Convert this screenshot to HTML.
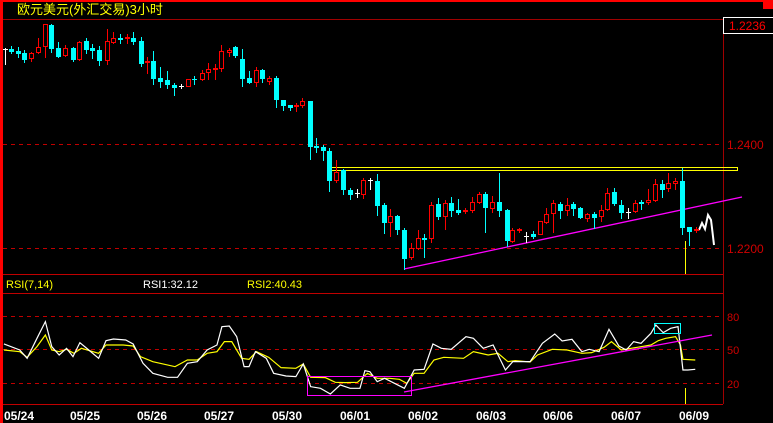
<!DOCTYPE html>
<html><head><meta charset="utf-8"><style>
html,body{margin:0;padding:0;background:#000;width:773px;height:423px;overflow:hidden}
svg{display:block}
text{font-family:"Liberation Sans","Noto Sans CJK SC",sans-serif}
</style></head><body>
<svg id="s" width="773" height="423" viewBox="0 0 773 423" xmlns="http://www.w3.org/2000/svg" shape-rendering="crispEdges">
<rect x="0" y="0" width="773" height="423" fill="#000"/>
<rect x="0" y="0" width="773" height="2" fill="#f00"/>
<rect x="0" y="0" width="3" height="423" fill="#f00"/>
<rect x="763" y="0" width="10" height="9" fill="#f00"/>
<text x="17" y="14" fill="#ff0" font-size="13" font-family="'Liberation Sans','Noto Sans CJK SC',sans-serif">欧元美元(外汇交易)3小时</text>
<line x1="3" y1="19.5" x2="723" y2="19.5" stroke="#a00000"/>
<line x1="723.5" y1="19" x2="723.5" y2="404" stroke="#a00000"/>
<rect x="723.5" y="17.5" width="50" height="16" fill="#000" stroke="#fff"/>
<text x="729" y="30" fill="#f00" font-size="12">1.2236</text>
<g stroke="#c00000" stroke-dasharray="4,4">
<line x1="3" y1="144.5" x2="723" y2="144.5"/>
<line x1="3" y1="248.5" x2="723" y2="248.5"/>
<line x1="3" y1="316.5" x2="723" y2="316.5"/>
<line x1="3" y1="349.5" x2="723" y2="349.5"/>
<line x1="3" y1="383.5" x2="723" y2="383.5"/>
</g>
<text x="727" y="149" fill="#d00000" font-size="12">1.2400</text>
<text x="727" y="253" fill="#d00000" font-size="12">1.2200</text>
<text x="727" y="321" fill="#d00000" font-size="11">80</text>
<text x="727" y="354" fill="#d00000" font-size="11">50</text>
<text x="727" y="388" fill="#d00000" font-size="11">20</text>
<line x1="3" y1="274.5" x2="723" y2="274.5" stroke="#c00000"/>
<line x1="3" y1="293.5" x2="723" y2="293.5" stroke="#c00000"/>
<line x1="3" y1="404.5" x2="723" y2="404.5" stroke="#c00000"/>
<text x="6" y="288" fill="#ff0" font-size="11">RSI(7,14)</text>
<text x="143" y="288" fill="#fff" font-size="11">RSI1:32.12</text>
<text x="247" y="288" fill="#ff0" font-size="11">RSI2:40.43</text>
<rect x="328.5" y="167.5" width="409" height="3" fill="none" stroke="#ff0"/>
<line x1="404" y1="269" x2="742" y2="197" stroke="#f0f" stroke-width="1.3" shape-rendering="auto"/>
<line x1="685.5" y1="241" x2="685.5" y2="274" stroke="#ff0"/>
<line x1="685.5" y1="388" x2="685.5" y2="404" stroke="#ff0"/>
<polyline points="699,230 702,223 705,229 708,215 711,220 712,228 714,245" fill="none" stroke="#fff" stroke-width="2" shape-rendering="auto"/>
<g id="c"></g>
<g transform="translate(0,270) scale(0.4931,0.3333)" fill="none" shape-rendering="auto">
<polyline vector-effect="non-scaling-stroke" stroke-width="1.2" stroke="#ff0" points="8,240 40,245 55,262 75,230 92,195 105,240 120,245 135,238 150,250 165,235 200,250 215,225 250,225 270,228 285,260 310,275 355,290 380,270 400,270 420,250 440,245 455,215 470,215 490,265 505,268 520,245 545,262 570,293 600,295 615,282 630,322 660,323 680,337 700,338 725,337 745,310 765,325 790,325 810,328 825,340 840,310 860,310 880,270 900,262 940,265 960,245 990,255 1010,250 1030,275 1045,272 1075,276 1090,255 1120,238 1150,240 1180,250 1200,248 1225,232 1240,215 1260,240 1280,235 1300,230 1320,225 1335,212 1350,205 1370,200 1380,225 1385,268 1410,270"/>
<polyline vector-effect="non-scaling-stroke" stroke-width="1.2" stroke="#fff" points="8,222 40,240 55,265 75,205 92,155 105,230 120,255 135,235 148,260 162,218 180,240 200,265 215,212 230,207 255,210 270,222 290,280 310,310 340,322 360,322 380,280 400,275 420,240 440,225 450,170 465,168 480,200 495,290 505,290 518,245 540,265 555,310 580,318 600,320 615,282 630,350 650,355 670,372 690,345 710,355 730,355 740,302 750,305 765,335 780,325 800,340 820,355 840,300 860,298 878,222 895,235 915,238 945,200 960,205 980,235 1000,225 1025,300 1040,275 1075,275 1100,220 1125,192 1140,213 1160,208 1180,245 1195,238 1215,245 1235,178 1255,228 1270,240 1285,215 1300,220 1320,190 1330,165 1345,188 1360,175 1375,170 1385,300 1395,300 1410,298"/>
</g>
<rect x="307.5" y="376.5" width="104" height="19" fill="none" stroke="#f0f"/>
<line x1="404" y1="392" x2="712" y2="335" stroke="#f0f" stroke-width="1.3" shape-rendering="auto"/>
<rect x="654.5" y="323.5" width="26" height="10" fill="none" stroke="#0ff"/>
<g fill="#fff" font-size="12" font-weight="bold">
<text x="4" y="420">05/24</text><text x="70" y="420">05/25</text><text x="137" y="420">05/26</text><text x="204" y="420">05/27</text><text x="272" y="420">05/30</text><text x="340" y="420">06/01</text><text x="408" y="420">06/02</text><text x="476" y="420">06/03</text><text x="543" y="420">06/06</text><text x="611" y="420">06/07</text><text x="679" y="420">06/09</text>
</g>
</svg>
<script>
var d=[[4.5,49,50,48,65,'w'],[11,49,52,46,54,'c'],[17.5,51,54,47,58,'c'],[24,53,60,50,63,'c'],[31,53,59,52,62,'r'],[38,47,53,38,54,'r'],[45,24,47,24,58,'r'],[51,25,49,24,53,'c'],[58,48,57,42,58,'c'],[65,48,56,45,57,'r'],[72.5,48,60,47,62,'c'],[79,42,60,41,61,'r'],[85.5,41,50,38,54,'c'],[92,48,51,44,59,'c'],[99,50,61,46,66,'c'],[106.5,41,61,29,65,'r'],[112.5,38,43,32,44,'r'],[119.5,38,40,34,44,'c'],[126.5,37,39,34,44,'r'],[133,38,42,32,45,'c'],[140.5,41,64,37,67,'c'],[146.5,61,63,57,74,'r'],[153,61,79,51,85,'c'],[160,78,82,67,88,'c'],[167,80,85,71,89,'c'],[173.5,85,88,83,96,'c'],[180.5,86,87,84,89,'w'],[187.5,79,87,79,87,'r'],[194,79,80,76,85,'c'],[201.5,73,80,70,81,'r'],[207.5,69,73,63,80,'r'],[214.5,68,70,64,80,'r'],[221,51,69,45,72,'r'],[228.5,50,53,48,57,'r'],[235,47,56,46,58,'c'],[242,59,79,49,87,'c'],[248.5,78,83,71,84,'c'],[255.5,70,83,67,87,'r'],[262,70,79,69,83,'c'],[268.5,78,82,76,85,'r'],[276,78,100,76,108,'c'],[283,100,106,100,111,'c'],[290,105,108,105,111,'c'],[295.5,105,107,103,112,'r'],[302,101,106,98,108,'r'],[309.5,101,147,101,160,'c'],[316,146,148,138,153,'c'],[323,147,151,145,161,'c'],[329,151,181,148,192,'c'],[336,172,181,160,183,'r'],[343,170,190,169,195,'c'],[350,190,195,188,200,'c'],[357,193,194,189,198,'w'],[363,180,195,178,199,'r'],[370,180,181,178,190,'w'],[377,181,206,174,216,'c'],[384,205,223,203,234,'c'],[390,216,223,209,237,'r'],[397,216,230,215,235,'c'],[404,230,259,228,270,'c'],[411,248,258,243,260,'r'],[418,238,249,230,250,'r'],[424,238,240,234,258,'c'],[431,205,239,202,243,'r'],[438,204,217,198,220,'c'],[445,203,217,200,230,'r'],[451,203,211,197,217,'c'],[458,210,213,199,215,'c'],[465,210,212,208,214,'r'],[472,202,211,197,213,'r'],[479,194,203,192,204,'r'],[485,194,208,192,233,'c'],[492,202,209,196,213,'r'],[499,202,211,173,217,'c'],[507,210,241,209,247,'c'],[512,230,242,228,243,'r'],[519,229,231,228,233,'r'],[526,236,237,232,243,'w'],[533,234,237,231,239,'c'],[540,221,235,221,235,'r'],[546,214,223,208,224,'r'],[553,203,214,200,233,'r'],[560,204,211,202,219,'c'],[567,205,211,198,216,'r'],[573,204,209,202,216,'c'],[580,208,218,207,219,'c'],[587,214,219,213,222,'r'],[594,214,218,212,229,'c'],[601,210,217,205,222,'r'],[607,193,210,188,211,'r'],[614,192,204,188,206,'c'],[621,205,213,200,219,'c'],[628,212,213,208,219,'w'],[635,203,212,200,213,'r'],[641,202,204,200,210,'c'],[648,200,203,189,205,'r'],[655,184,201,179,202,'r'],[662,184,190,180,198,'c'],[668,183,189,173,192,'r'],[675,181,184,178,190,'r'],[682,181,228,168,235,'c'],[689,227,232,227,246,'c'],[696,229,231,227,233,'r']];
var g=document.getElementById('c'),s='';
d.forEach(function(a){var x=Math.round(a[0]),t=a[1],b=a[2],h=a[3],l=a[4],k=a[5];
var col=k=='c'?'#0ff':k=='r'?'#f00':'#fff';
s+='<line x1="'+(x+.5)+'" y1="'+h+'" x2="'+(x+.5)+'" y2="'+l+'" stroke="'+col+'"/>';
if(k=='c')s+='<rect x="'+(x-2)+'" y="'+t+'" width="5" height="'+Math.max(1,b-t)+'" fill="#0ff"/>';
else if(k=='r')s+='<rect x="'+(x-1.5)+'" y="'+(t+.5)+'" width="4" height="'+Math.max(1,b-t-1)+'" fill="#000" stroke="#f00"/>';
else s+='<line x1="'+(x-2)+'" y1="'+(t+.5)+'" x2="'+(x+3)+'" y2="'+(t+.5)+'" stroke="#fff"/>';});
g.innerHTML=s;
</script>
</body></html>
